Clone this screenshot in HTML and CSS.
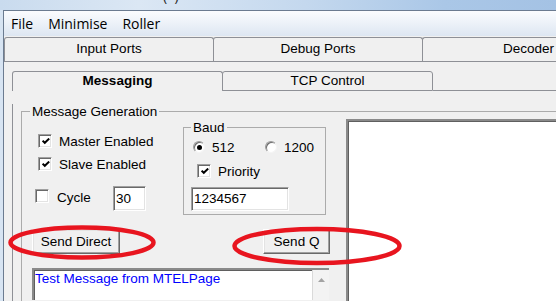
FILE: index.html
```html
<!DOCTYPE html>
<html>
<head>
<meta charset="utf-8">
<link rel="stylesheet" href="styles.css">
</head>
<body>
<div class="titlebar"><span class="title">(&nbsp;&nbsp;)</span></div>
<div class="frame">
  <div class="window">
    <div class="menubar"><span>File</span><span>Minimise</span><span>Roller</span></div>
    <div class="otabs">
      <div class="otab">Input Ports</div>
      <div class="otab">Debug Ports</div>
      <div class="otab last">Decoder</div>
    </div>
    <div class="opanel">
      <div class="itabs">
        <div class="itab sel">Messaging</div>
        <div class="itab">TCP Control</div>
        <div class="ifill"></div>
      </div>
      <div class="ipanel">
        <fieldset class="group msggen">
          <legend>Message Generation</legend>
          <div class="cols">
            <div class="leftcol">
              <div class="toprow">
                <div class="checks">
                  <div class="chk-row master"><span class="box"><svg width="8" height="7" viewBox="0 0 8 7"><path d="M0.6 2.6 L2.8 4.8 L7.2 0.6" fill="none" stroke="#000" stroke-width="2"/></svg></span><span class="lbl">Master Enabled</span></div>
                  <div class="chk-row slave"><span class="box"><svg width="8" height="7" viewBox="0 0 8 7"><path d="M0.6 2.6 L2.8 4.8 L7.2 0.6" fill="none" stroke="#000" stroke-width="2"/></svg></span><span class="lbl">Slave Enabled</span></div>
                  <div class="chk-row cycle"><span class="box"></span><span class="lbl cyc">Cycle</span><span class="field num">30</span></div>
                </div>
                <fieldset class="group baud">
                  <legend>Baud</legend>
                  <div class="radios">
                    <span class="radio on"></span><span class="rlbl r512">512</span>
                    <span class="radio"></span><span class="rlbl">1200</span>
                  </div>
                  <div class="chk-row prio"><span class="box"><svg width="8" height="7" viewBox="0 0 8 7"><path d="M0.6 2.6 L2.8 4.8 L7.2 0.6" fill="none" stroke="#000" stroke-width="2"/></svg></span><span class="lbl">Priority</span></div>
                  <div class="field code">1234567</div>
                </fieldset>
              </div>
              <div class="btnrow">
                <div class="btn direct">Send Direct</div>
                <div class="btn sendq">Send Q</div>
              </div>
              <div class="msgbox">
                <div class="msgtext">Test Message from MTELPage</div>
                <div class="vscroll"><svg width="7" height="4" viewBox="0 0 7 4"><path d="M3.5 0 L7 4 L0 4 Z" fill="#a3a3a3"/></svg></div>
              </div>
            </div>
            <div class="output"></div>
          </div>
        </fieldset>
      </div>
    </div>
  </div>
</div>
<svg class="marks" width="556" height="301" viewBox="0 0 556 301">
  <ellipse cx="82" cy="242.5" rx="71.5" ry="15" fill="none" stroke="#e8151f" stroke-width="4.5"/>
  <ellipse cx="317" cy="246" rx="82.5" ry="17" fill="none" stroke="#e8151f" stroke-width="4.5"/>
</svg>
</body>
</html>
```

FILE: styles.css
```css
* { box-sizing: border-box; }
html, body { margin: 0; padding: 0; overflow: hidden; }
body {
  width: 556px;
  height: 301px;
  position: relative;
  background: #f0f0f0;
  font-family: "Liberation Sans", Arial, sans-serif;
  font-size: 13.5px;
  color: #000;
}

.titlebar {
  height: 10px;
  overflow: hidden;
  background: linear-gradient(to right, #c9dbee 0%, #dbe7f4 25%, #c4d8ee 55%, #aac7e7 80%, #a4c2e4 100%);
}
.title {
  display: block;
  margin-left: 163px;
  margin-top: -12px;
  line-height: 16px;
  font-family: "Open Sans", sans-serif;
  font-size: 14px;
  color: #2a2a2a;
}

.frame {
  padding-left: 3px;
  background: #d7e4f2;
}
.window {
  border-left: 1px solid #6b7b90;
  border-top: 1px solid #6b7b90;
  background: #f0f0f0;
  height: 291px;
  overflow: hidden;
}

.menubar {
  height: 25px;
  display: flex;
  gap: 15px;
  padding-left: 7px;
  background: linear-gradient(#fbfcfe, #e9eff7 60%, #dde6f2);
  font-family: "Open Sans", "Noto Sans", sans-serif;
  font-size: 14px;
  line-height: 25px;
  color: #000;
}

.otabs {
  display: flex;
  margin-top: 1px;
  height: 24px;
}
.otab {
  flex: none;
  width: 210px;
  margin-right: -1px;
  border: 1px solid #8e9096;
  border-bottom: none;
  border-radius: 3px 3px 0 0;
  text-align: center;
  line-height: 22px;
  background: #f0f0f0;
}
.otab.last {
  flex: 1;
  width: auto;
  margin-right: 0;
  border-right: none;
  border-top-right-radius: 0;
  text-align: left;
  padding-left: 80px;
}

.opanel {
  border-top: 1px solid #8e9096;
  padding: 9px 0 0 8px;
}

.itabs {
  display: flex;
  height: 20px;
}
.itab {
  flex: none;
  width: 211px;
  border: 1px solid #8e9096;
  border-radius: 3px 3px 0 0;
  text-align: center;
  line-height: 17px;
  background: #f0f0f0;
}
.itab.sel {
  border-bottom: none;
  font-weight: bold;
  line-height: 18px;
}
.itab + .itab { margin-left: -1px; }
.ifill {
  flex: 1;
  border-bottom: 1px solid #8e9096;
}

.ipanel {
  border-left: 1px solid #8e9096;
  padding-left: 8px;
  height: 210px;
}

.group {
  margin: 0;
  padding: 0;
  min-width: 0;
  border: 1px solid #ababab;
}
.group legend {
  padding: 0 2px;
  line-height: 15px;
}
.msggen {
  margin-top: 13px;
  width: 535px;
  border-bottom: none;
  border-right: none;
  height: 197px;
}
.msggen legend { margin-left: 8px; }

.cols { display: flex; }
.leftcol { flex: none; width: 324px; }
.output {
  flex: 1;
  height: 182px;
  background: #fff;
  border-top: 2px solid #8a8a8a;
  border-left: 2px solid #8a8a8a;
  box-shadow: inset 1px 1px 0 #5f5f5f;
}

.toprow { display: flex; align-items: flex-start; }
.checks { flex: none; width: 161px; padding-top: 15px; }

.chk-row {
  display: flex;
  align-items: center;
  height: 14px;
}
.master { margin-left: 16px; }
.slave { margin-left: 16px; margin-top: 9px; }
.cycle { margin-left: 13px; margin-top: 15px; height: 25px; }

.box {
  flex: none;
  width: 14px;
  height: 14px;
  background: #fff;
  border: 1px solid;
  border-color: #a0a0a0 #fff #fff #a0a0a0;
  box-shadow: inset 1px 1px 0 #696969, inset -1px -1px 0 #e3e3e3;
  display: flex;
  align-items: center;
  justify-content: center;
  padding: 1px 0 0 1px;
}
.box svg { display: block; }
.lbl { margin-left: 7px; white-space: nowrap; }
.cycle .box { margin-bottom: 5px; }
.cyc { width: 56px; margin-left: 8px; margin-bottom: 2px; }

.field {
  background: #fff;
  border: 1px solid;
  border-color: #a0a0a0 #fff #fff #a0a0a0;
  box-shadow: inset 1px 1px 0 #696969, inset -1px -1px 0 #e3e3e3;
  padding-left: 2px;
  white-space: nowrap;
}
.num {
  flex: none;
  width: 33px;
  height: 25px;
  line-height: 23px;
}

.baud {
  flex: none;
  width: 143px;
  margin-top: 1px;
  padding-bottom: 3px;
}
.baud legend { margin-left: 7px; }
.radios {
  display: flex;
  align-items: center;
  height: 12px;
  margin-top: 6px;
  margin-left: 9px;
}
.radio {
  flex: none;
  width: 12px;
  height: 12px;
  border-radius: 50%;
  background: #fff;
  border: 1px solid;
  border-color: #9a9a9a #f4f4f4 #f4f4f4 #9a9a9a;
  box-shadow: inset 1px 1px 0 #6c6c6c;
  display: flex;
  align-items: center;
  justify-content: center;
}
.radio.on::after {
  content: "";
  width: 5px;
  height: 5px;
  border-radius: 50%;
  background: #000;
  margin: 1px 0 0 1px;
}
.rlbl { margin-left: 7px; }
.r512 { width: 53px; }
.prio { margin-left: 13px; margin-top: 11px; }
.code {
  width: 98px;
  height: 24px;
  line-height: 22px;
  margin-top: 9px;
  margin-left: 7px;
}

.btnrow {
  display: flex;
  margin-top: 14px;
}
.btn {
  flex: none;
  height: 25px;
  line-height: 23px;
  text-align: center;
  background: #f0f0f0;
  border: 1px solid;
  border-color: #fff #696969 #696969 #fff;
  box-shadow: inset -1px -1px 0 #a0a0a0, inset 1px 1px 0 #e3e3e3;
}
.direct { width: 88px; margin-left: 10px; }
.sendq { width: 67px; margin-left: 143px; }

.msgbox {
  display: flex;
  margin-top: 14px;
  margin-left: 10px;
  width: 297px;
  height: 32px;
  background: #fff;
  border-top: 2px solid #8a8a8a;
  border-left: 2px solid #8a8a8a;
  box-shadow: inset 1px 1px 0 #5f5f5f;
}
.msgtext {
  flex: 1;
  padding: 1px 0 0 1px;
  line-height: 15px;
  color: #0000ff;
  white-space: nowrap;
}
.vscroll {
  flex: none;
  width: 17px;
  background: #f3f3f3;
  border-left: 1px solid #dadada;
  display: flex;
  justify-content: center;
  padding-top: 8px;
}
.vscroll svg { display: block; }

.marks {
  position: absolute;
  left: 0;
  top: 0;
  pointer-events: none;
}
```
